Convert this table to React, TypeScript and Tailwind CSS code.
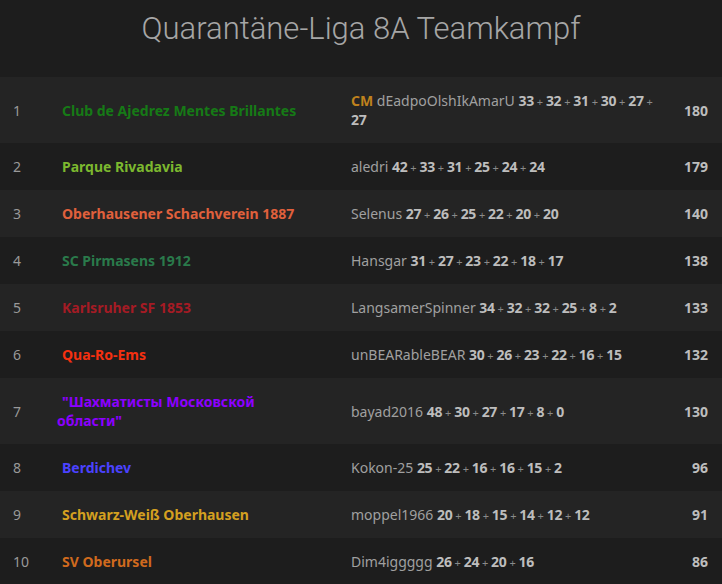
import React from 'react';

type Row = {
  rank: number;
  team: string;
  color: string;
  title?: string;
  player: string;
  points: number[];
  score: number;
};

const rows: Row[] = [
  { rank: 1, team: 'Club de Ajedrez Mentes Brillantes', color: 'text-[#167a16]', title: 'CM', player: 'dEadpoOlshIkAmarU', points: [33, 32, 31, 30, 27, 27], score: 180 },
  { rank: 2, team: 'Parque Rivadavia', color: 'text-[#7cb82f]', player: 'aledri', points: [42, 33, 31, 25, 24, 24], score: 179 },
  { rank: 3, team: 'Oberhausener Schachverein 1887', color: 'text-[#e0603c]', player: 'Selenus', points: [27, 26, 25, 22, 20, 20], score: 140 },
  { rank: 4, team: 'SC Pirmasens 1912', color: 'text-[#2a7a4b]', player: 'Hansgar', points: [31, 27, 23, 22, 18, 17], score: 138 },
  { rank: 5, team: 'Karlsruher SF 1853', color: 'text-[#a51b24]', player: 'LangsamerSpinner', points: [34, 32, 32, 25, 8, 2], score: 133 },
  { rank: 6, team: 'Qua-Ro-Ems', color: 'text-[#f53010]', player: 'unBEARableBEAR', points: [30, 26, 23, 22, 16, 15], score: 132 },
  { rank: 7, team: '"Шахматисты Московской области"', color: 'text-[#8c00ff]', player: 'bayad2016', points: [48, 30, 27, 17, 8, 0], score: 130 },
  { rank: 8, team: 'Berdichev', color: 'text-[#4b42ff]', player: 'Kokon-25', points: [25, 22, 16, 16, 15, 2], score: 96 },
  { rank: 9, team: 'Schwarz-Weiß Oberhausen', color: 'text-[#d4a020]', player: 'moppel1966', points: [20, 18, 15, 14, 12, 12], score: 91 },
  { rank: 10, team: 'SV Oberursel', color: 'text-[#d06a1e]', player: 'Dim4iggggg', points: [26, 24, 20, 16], score: 86 },
];

export default function App() {
  return (
    <div className="w-[722px] h-[584px] overflow-hidden bg-[#1d1d1d] font-['Noto_Sans',sans-serif]">
      <div className="h-[77px] pt-[13px] text-center">
        <h1 className="font-['Roboto',sans-serif] font-light text-[31px] leading-none text-[#a6a6a6]">
          Quarantäne-Liga 8A Teamkampf
        </h1>
      </div>

      <div className="text-[14px] leading-[19px]">
        {rows.map((r) => (
          <div
            key={r.rank}
            className={`grid grid-cols-[45px_295px_332px_1fr] items-center ${r.rank % 2 === 1 ? 'bg-[#242424]' : 'bg-[#1d1d1d]'}`}
          >
            <div className="pl-[13px] py-[14px] text-[#999]">{r.rank}</div>
            <div className={`pl-[12px] pr-[28px] py-[14px] font-bold ${r.color}`}>
              <span className="inline-block w-[5px]" />
              {r.team}
            </div>
            <div className="pl-[11px] pr-[10px] py-[14px] text-[#a0a0a0]">
              {r.title && <span className="font-bold text-[#bf811d]">{r.title} </span>}
              {r.player}{' '}
              {r.points.map((p, i) => (
                <React.Fragment key={i}>
                  <strong className="font-bold text-[#bdbdbd] tracking-[-0.3px]">{p}</strong>
                  {i < r.points.length - 1 && <span className="text-[11px] leading-none text-[#8a8a8a]"> + </span>}
                </React.Fragment>
              ))}
            </div>
            <div className="pr-[14px] py-[14px] text-right font-bold text-[#bdbdbd]">{r.score}</div>
          </div>
        ))}
      </div>
    </div>
  );
}
